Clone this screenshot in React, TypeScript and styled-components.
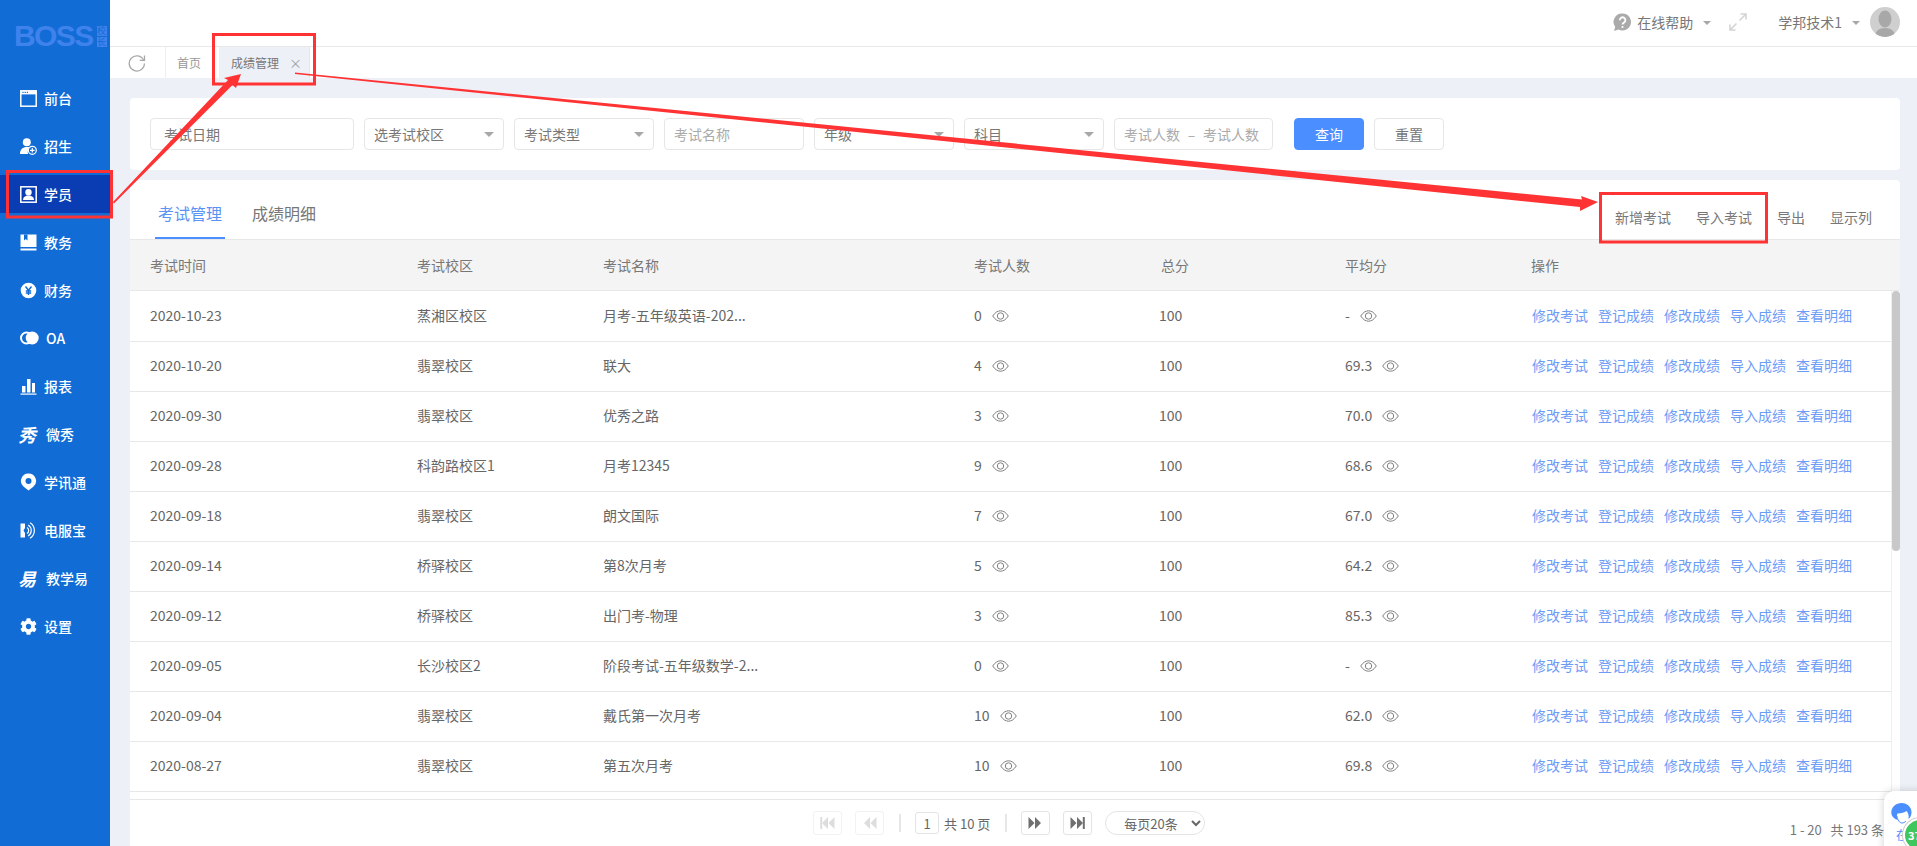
import React from 'react';
import styled, { createGlobalStyle } from 'styled-components';
import { FaCog } from 'react-icons/fa';

const GlobalStyle = createGlobalStyle`
  html, body {
    margin: 0;
    padding: 0;
    height: 100%;
    overflow: hidden;
    font-family: "Noto Sans CJK SC", "Noto Sans", sans-serif;
    font-size: 14px;
    color: #666;
    background: #fff;
  }
  * { box-sizing: border-box; }
`;

const Layout = styled.div`
  position: relative;
  display: flex;
  width: 100%;
  height: 100vh;
  overflow: hidden;
`;

/* sidebar */
const Sidebar = styled.aside`
  flex: 0 0 110px;
  background: #116cd6;
  color: #fff;
`;

const Logo = styled.div`
  display: flex;
  align-items: center;
  gap: 2px;
  height: 76px;
  padding: 0 0 4px 14px;
`;

const LogoWord = styled.span`
  font-family: "Liberation Sans", sans-serif;
  font-weight: 700;
  font-size: 30px;
  line-height: 24px;
  letter-spacing: -1.6px;
  color: #3f82ec;
`;

const LogoMark = styled.span`
  display: flex;
  flex-direction: column;
  gap: 1px;
  margin-left: 2px;
`;

const LogoChar = styled.span`
  width: 10px;
  height: 10px;
  background: #3f82ec;
  color: #116cd6;
  font-size: 9px;
  line-height: 10px;
  text-align: center;
`;

const NavList = styled.nav`
  display: flex;
  flex-direction: column;
  gap: 10px;
  padding-top: 3px;
`;

const NavItem = styled.a<{ $active?: boolean }>`
  display: flex;
  align-items: center;
  height: 38px;
  padding-left: 20px;
  background: ${(p) => (p.$active ? '#0a3db3' : 'transparent')};
  font-size: 14px;
  font-weight: 500;
  color: #fff;
`;

const NavIcon = styled.span`
  display: flex;
  align-items: center;
  min-width: 17px;
  height: 18px;
  margin-right: 7px;
  font-size: 17px;
`;

const GlyphIcon = styled.span`
  display: inline-block;
  width: 19px;
  font-size: 18px;
  font-weight: 700;
  line-height: 18px;
  transform: skewX(-14deg);
  color: #fff;
`;

/* top area */
const Main = styled.div`
  flex: 1;
  min-width: 0;
  display: flex;
  flex-direction: column;
`;

const Header = styled.header`
  flex: 0 0 47px;
  display: flex;
  align-items: center;
  justify-content: flex-end;
  padding: 0 17px 2px 0;
  border-bottom: 1px solid #e8e8e8;
  color: #777;
  font-size: 14px;
`;

const HeaderText = styled.span`
  margin-left: 5px;
`;

const Caret = styled.i<{ $size?: number; $color?: string }>`
  display: inline-block;
  width: 0;
  height: 0;
  border-left: ${(p) => p.$size ?? 5}px solid transparent;
  border-right: ${(p) => p.$size ?? 5}px solid transparent;
  border-top: ${(p) => p.$size ?? 5}px solid ${(p) => p.$color ?? '#a8a8a8'};
`;

const HeaderCaret = styled(Caret)`
  margin: 2px 0 0 10px;
`;

const ExpandWrap = styled.span`
  display: flex;
  margin: 0 31px 0 18px;
`;

const UserName = styled.span`
  color: #777;
`;

const Avatar = styled.span`
  width: 30px;
  height: 30px;
  margin-left: 10px;
  border-radius: 50%;
  background: #cfcfcf;
  overflow: hidden;
  display: flex;
`;

const TabBar = styled.div`
  flex: 0 0 31px;
  display: flex;
  align-items: stretch;
  background: #fff;
  font-size: 12px;
  color: #999;
`;

const Reload = styled.span`
  width: 56px;
  padding-left: 18px;
  display: flex;
  align-items: center;
  border-right: 1px solid #eee;
`;

const HomeTab = styled.span`
  width: 54px;
  padding-left: 11px;
  display: flex;
  align-items: center;
  border-right: 1px solid #eee;
`;

const ActiveTab = styled.span`
  width: 90px;
  padding-left: 11px;
  display: flex;
  align-items: center;
  background: #eef0f8;
  color: #777;
  border-right: 1px solid #e6e6e6;
`;

const TabClose = styled.span`
  margin-left: 10px;
  font-size: 13px;
  line-height: 1;
  color: #a0a0a0;
`;

const Content = styled.main`
  flex: 1;
  min-height: 0;
  display: flex;
  flex-direction: column;
  gap: 10px;
  padding: 20px 17px 0 20px;
  background: #eef0f8;
`;

/* filters */
const FilterCard = styled.section`
  flex: 0 0 72px;
  display: flex;
  gap: 10px;
  padding: 20px;
  background: #fff;
  border-radius: 4px;
`;

const Field = styled.input<{ $width: number; $pad?: number }>`
  width: ${(p) => p.$width}px;
  height: 32px;
  padding: 0 0 0 ${(p) => p.$pad ?? 9}px;
  border: 1px solid #e6e6e6;
  border-radius: 4px;
  font: inherit;
  color: #666;
  outline: none;
  &::placeholder { color: #aaa; }
`;

const DateField = styled(Field)`
  &::placeholder { color: #777; }
`;

const SelectBox = styled.div`
  width: 140px;
  height: 32px;
  display: flex;
  align-items: center;
  justify-content: space-between;
  padding: 0 9px;
  border: 1px solid #e6e6e6;
  border-radius: 4px;
  color: #777;
`;

const RangeBox = styled.div`
  width: 159px;
  height: 32px;
  display: flex;
  align-items: center;
  justify-content: space-between;
  padding: 0 13px 0 9px;
  border: 1px solid #e6e6e6;
  border-radius: 4px;
  color: #aaa;
`;

const Button = styled.button<{ $primary?: boolean }>`
  width: 70px;
  height: 32px;
  margin-left: ${(p) => (p.$primary ? '11px' : '0')};
  border: 1px solid ${(p) => (p.$primary ? '#4a8eff' : '#e6e6e6')};
  border-radius: 4px;
  background: ${(p) => (p.$primary ? '#4a8eff' : '#fff')};
  color: ${(p) => (p.$primary ? '#fff' : '#777')};
  font: inherit;
  padding: 0;
`;

/* table */
const TableCard = styled.section`
  flex: 1;
  min-height: 0;
  display: flex;
  flex-direction: column;
  background: #fff;
  border-radius: 4px 4px 0 0;
`;

const TabsRow = styled.div`
  flex: 0 0 59px;
  display: flex;
  align-items: stretch;
  justify-content: space-between;
  padding: 0 28px 0 25px;
`;

const Tabs = styled.div`
  display: flex;
  gap: 24px;
`;

const TabLabel = styled.span<{ $active?: boolean }>`
  display: flex;
  align-items: center;
  padding: 9px 3px 0;
  font-size: 16px;
  color: ${(p) => (p.$active ? '#5b93f5' : '#777')};
  border-bottom: 2px solid ${(p) => (p.$active ? '#4a8eff' : 'transparent')};
`;

const Actions = styled.div`
  display: flex;
  align-items: center;
  padding-top: 15px;
  color: #777;
`;

const Action = styled.span<{ $gap: number }>`
  margin-left: ${(p) => p.$gap}px;
`;

const Columns = styled.div`
  display: grid;
  grid-template-columns: 267px 186px 371px 187px 184px 186px 1fr;
  padding-left: 20px;
  align-items: center;
`;

const HeadRow = styled(Columns)`
  flex: 0 0 52px;
  background: #f4f4f4;
  border-top: 1px solid #e8e8e8;
  border-bottom: 1px solid #e8e8e8;
  color: #777;
`;

const BodyWrap = styled.div`
  position: relative;
  flex: 1;
  min-height: 0;
  overflow: hidden;
`;

const RowList = styled.div`
  height: 100%;
  margin-right: 8px;
  padding-top: 1px;
  border-right: 1px solid #eee;
`;

const ScrollThumb = styled.span`
  position: absolute;
  right: 0;
  top: 0;
  width: 8px;
  height: 260px;
  border-radius: 4px;
  background: #c8c8c8;
`;

const Row = styled(Columns)`
  grid-template-columns: 267px 186px 371px 185px 186px 186px 1fr;
  height: 50px;
  padding-bottom: 4px;
  border-bottom: 1px solid #e8e8e8;
  color: #666;
`;

const Cell = styled.span`
  display: flex;
  align-items: center;
  white-space: nowrap;
`;

const EyeWrap = styled.span`
  display: flex;
  margin: 2px 0 0 10px;
`;

const Links = styled.span`
  display: flex;
  gap: 10px;
  margin-left: 1px;
`;

const LinkText = styled.a`
  width: 56px;
  color: #6c9cf6;
  white-space: nowrap;
`;

/* pager */
const Footer = styled.footer`
  flex: 0 0 47px;
  position: relative;
  display: flex;
  align-items: center;
  padding: 0 0 0 683px;
  border-top: 1px solid #e8e8e8;
  margin-top: -1px;
  background: #fff;
  color: #666;
`;

const PageButton = styled.span<{ $off?: boolean }>`
  width: 29px;
  height: 24px;
  display: flex;
  align-items: center;
  justify-content: center;
  border: 1px solid ${(p) => (p.$off ? '#f2f2f2' : '#e4e4e4')};
  border-radius: 3px;
  margin-right: 13px;
  color: ${(p) => (p.$off ? '#ddd' : '#6f6f6f')};
`;

const PagerSep = styled.i`
  width: 2px;
  height: 18px;
  background: #e6e6e6;
  margin: 0 14px 0 2px;
`;

const PageInput = styled.input`
  width: 24px;
  height: 22px;
  padding: 0;
  border: 1px solid #e4e4e4;
  border-radius: 3px;
  text-align: center;
  font: inherit;
  font-size: 13px;
  color: #666;
`;

const PageTotal = styled.span`
  margin: 0 13px 0 5px;
  font-size: 13px;
`;

const PageSize = styled.select`
  width: 100px;
  height: 24px;
  padding-left: 14px;
  border: 1px solid #e4e4e4;
  border-radius: 12px;
  background: #fff;
  font: inherit;
  font-size: 13px;
  color: #666;
  outline: none;
`;

const Summary = styled.span`
  position: absolute;
  right: 16px;
  top: 21px;
  font-size: 13px;
  line-height: 18px;
  white-space: pre;
  color: #777;
`;

/* floating chat helper, hangs over the bottom right corner */
const Chat = styled.div`
  position: absolute;
  left: 1884px;
  top: 791px;
  width: 60px;
  height: 70px;
  background: #fff;
  border-radius: 10px;
  box-shadow: 0 0 8px rgba(0, 0, 0, 0.18);
`;

const ChatFace = styled.span`
  position: absolute;
  left: 7px;
  top: 12px;
  display: flex;
`;

const ChatLabel = styled.span`
  position: absolute;
  left: 12px;
  top: 36px;
  font-size: 12px;
  line-height: 16px;
  color: #4a8eff;
`;

const ChatBadge = styled.span`
  position: absolute;
  left: 19px;
  top: 27px;
  width: 34px;
  height: 34px;
  border-radius: 50%;
  background: #3fc65c;
  border: 2px solid #fff;
  box-shadow: 0 0 0 1px #cfcfcf;
  color: #fff;
  font-size: 11px;
  font-weight: 700;
  line-height: 30px;
  padding-left: 3px;
`;

/* the red hand drawn marks lie over the whole page */
const Marks = styled.svg`
  position: absolute;
  left: 0;
  top: 0;
  width: 1917px;
  height: 846px;
  pointer-events: none;
`;

const icons: Record<string, React.ReactNode> = {
  front: (
    <svg width="17" height="17" viewBox="0 0 17 17" fill="none">
      <rect x="0.8" y="0.8" width="15.4" height="15.4" stroke="#fff" strokeWidth="1.5" />
      <rect x="0.8" y="0.8" width="15.4" height="3.6" fill="#fff" />
      <rect x="2.4" y="1.8" width="1.2" height="1.2" fill="#116cd6" />
      <rect x="4.6" y="1.8" width="1.2" height="1.2" fill="#116cd6" />
      <rect x="6.8" y="1.8" width="1.2" height="1.2" fill="#116cd6" />
    </svg>
  ),
  enroll: (
    <svg width="17" height="17" viewBox="0 0 17 17">
      <circle cx="6.8" cy="4.3" r="4" fill="#fff" />
      <path d="M0 16c0-4.6 2.8-7 6.8-7 1.6 0 3 .4 4 1.1A5 5 0 0 0 8 16H0z" fill="#fff" />
      <circle cx="12.3" cy="12.3" r="4" fill="#116cd6" stroke="#fff" strokeWidth="1.2" />
      <path d="M12.3 10v4.6M10 12.3h4.6" stroke="#fff" strokeWidth="1.2" />
    </svg>
  ),
  student: (
    <svg width="17" height="17" viewBox="0 0 17 17" fill="none">
      <rect x="0.8" y="0.8" width="15.4" height="15.4" stroke="#fff" strokeWidth="1.5" />
      <circle cx="8.5" cy="6.3" r="3.2" fill="#fff" />
      <path d="M3 14c0-3 2.4-4.5 5.5-4.5S14 11 14 14H3z" fill="#fff" />
    </svg>
  ),
  academic: (
    <svg width="17" height="17" viewBox="0 0 17 17">
      <path d="M0.5 0.5h16v12.5H0.5z" fill="#fff" />
      <path d="M0.5 14.5h16v2h-16z" fill="#fff" />
      <path d="M4 0.5h3.5v6L5.7 5 4 6.5z" fill="#116cd6" />
    </svg>
  ),
  finance: (
    <svg width="17" height="17" viewBox="0 0 17 17" fill="none">
      <circle cx="8.5" cy="8.5" r="7.8" fill="#fff" />
      <path d="M5.5 4.5l3 3.8 3-3.8M8.5 8.3V13M5.8 9h5.4M5.8 11h5.4" stroke="#116cd6" strokeWidth="1.4" />
    </svg>
  ),
  oa: (
    <svg width="19" height="14" viewBox="0 0 19 14" fill="none">
      <circle cx="6.5" cy="7" r="5.5" stroke="#fff" strokeWidth="2" />
      <circle cx="12.2" cy="7" r="6.5" fill="#fff" />
    </svg>
  ),
  report: (
    <svg width="17" height="17" viewBox="0 0 17 17">
      <path d="M2 8h3.5v6.5H2zM7 1h3.5v13.5H7zM12 5h3v9.5h-3z" fill="#fff" />
      <path d="M0.5 15.5h16v1.2h-16z" fill="#fff" />
    </svg>
  ),
  notify: (
    <svg width="17" height="18" viewBox="0 0 17 18">
      <path d="M8.5 0.5a7.5 7.5 0 0 1 4.8 13.3L8.5 17.5l-4.8-3.7A7.5 7.5 0 0 1 8.5 0.5z" fill="#fff" />
      <circle cx="8.5" cy="8" r="3" fill="#116cd6" />
    </svg>
  ),
  service: (
    <svg width="17" height="17" viewBox="0 0 17 17" fill="none">
      <path d="M0.5 1.5h4.5V6L3.5 8.5 5 11v4.5H0.5z" fill="#fff" />
      <path d="M7 5.5a3.5 3.5 0 0 1 0 6M8.2 3a6.5 6.5 0 0 1 0 11M10 0.8a9 9 0 0 1 0 15.4" stroke="#fff" strokeWidth="1.2" />
    </svg>
  ),
};

const Eye = () => (
  <svg width="17" height="12" viewBox="0 0 17 12" fill="none" stroke="#808080" strokeWidth="1">
    <path d="M0.7 6C3 2.5 5.6 0.8 8.5 0.8S14 2.5 16.3 6C14 9.5 11.4 11.2 8.5 11.2S3 9.5 0.7 6z" />
    <circle cx="8.5" cy="6" r="3.2" />
  </svg>
);

const Triangles = ({ bar, flip }: { bar?: boolean; flip?: boolean }) => (
  <svg width="15" height="12" viewBox="0 0 15 12" fill="currentColor" style={flip ? { transform: 'scaleX(-1)' } : undefined}>
    <path d="M0.5 0l6 6-6 6zM7 0l6 6-6 6z" />
    {bar && <path d="M12.8 0h2v12h-2z" />}
  </svg>
);

const navItems = [
  { key: 'front', label: '前台' },
  { key: 'enroll', label: '招生' },
  { key: 'student', label: '学员', active: true },
  { key: 'academic', label: '教务' },
  { key: 'finance', label: '财务' },
  { key: 'oa', label: 'OA' },
  { key: 'report', label: '报表' },
  { key: 'show', label: '微秀', glyph: '秀' },
  { key: 'notify', label: '学讯通' },
  { key: 'service', label: '电服宝' },
  { key: 'easy', label: '教学易', glyph: '易' },
  { key: 'settings', label: '设置' },
];

const columns = ['考试时间', '考试校区', '考试名称', '考试人数', '总分', '平均分', '操作'];
const rowLinks = ['修改考试', '登记成绩', '修改成绩', '导入成绩', '查看明细'];

const exams = [
  ['2020-10-23', '蒸湘区校区', '月考-五年级英语-202...', '0', '100', '-'],
  ['2020-10-20', '翡翠校区', '联大', '4', '100', '69.3'],
  ['2020-09-30', '翡翠校区', '优秀之路', '3', '100', '70.0'],
  ['2020-09-28', '科韵路校区1', '月考12345', '9', '100', '68.6'],
  ['2020-09-18', '翡翠校区', '朗文国际', '7', '100', '67.0'],
  ['2020-09-14', '桥驿校区', '第8次月考', '5', '100', '64.2'],
  ['2020-09-12', '桥驿校区', '出门考-物理', '3', '100', '85.3'],
  ['2020-09-05', '长沙校区2', '阶段考试-五年级数学-2...', '0', '100', '-'],
  ['2020-09-04', '翡翠校区', '戴氏第一次月考', '10', '100', '62.0'],
  ['2020-08-27', '翡翠校区', '第五次月考', '10', '100', '69.8'],
];

export default function App() {
  return (
    <Layout>
      <GlobalStyle />
      <Sidebar>
        <Logo>
          <LogoWord>BOSS</LogoWord>
          <LogoMark>
            <LogoChar>校</LogoChar>
            <LogoChar>长</LogoChar>
          </LogoMark>
        </Logo>
        <NavList>
          {navItems.map((item) => (
            <NavItem key={item.key} $active={item.active}>
              <NavIcon>
                {item.glyph ? <GlyphIcon>{item.glyph}</GlyphIcon> : item.key === 'settings' ? <FaCog /> : icons[item.key]}
              </NavIcon>
              {item.label}
            </NavItem>
          ))}
        </NavList>
      </Sidebar>

      <Main>
        <Header>
          <svg width="19" height="19" viewBox="0 0 19 19">
            <path d="M9.5 0.5a8.5 8.5 0 1 1-4 16L1 18l1.2-4A8.5 8.5 0 0 1 9.5 0.5z" fill="#aaa" />
            <path d="M6.8 7.2a2.8 2.8 0 1 1 4.4 2.2c-1 .7-1.7 1.1-1.7 2.2" fill="none" stroke="#fff" strokeWidth="1.8" />
            <circle cx="9.5" cy="14" r="1.1" fill="#fff" />
          </svg>
          <HeaderText>在线帮助</HeaderText>
          <HeaderCaret $size={4.5} />
          <ExpandWrap>
            <svg width="18" height="18" viewBox="0 0 18 18" fill="none" stroke="#d4d4d4" strokeWidth="1.6">
              <path d="M10.5 7.5L17 1M11.5 1H17v5.5M7.5 10.5L1 17M6.5 17H1v-5.5" />
            </svg>
          </ExpandWrap>
          <UserName>学邦技术1</UserName>
          <HeaderCaret $size={4.5} />
          <Avatar>
            <svg width="30" height="30" viewBox="0 0 30 30">
              <ellipse cx="15" cy="12" rx="6.5" ry="8.5" fill="#a8a8a8" />
              <path d="M5 30c0-6 4-9 10-9s10 3 10 9z" fill="#a8a8a8" />
            </svg>
          </Avatar>
        </Header>

        <TabBar>
          <Reload>
            <svg width="18" height="18" viewBox="0 0 18 18" fill="none" stroke="#a8a8a8" strokeWidth="1.3">
              <path d="M15.6 6a7.6 7.6 0 1 0 .8 3.5" />
              <path d="M16.5 1.5V6.3h-4.8" />
            </svg>
          </Reload>
          <HomeTab>首页</HomeTab>
          <ActiveTab>
            成绩管理
            <TabClose>×</TabClose>
          </ActiveTab>
        </TabBar>

        <Content>
          <FilterCard>
            <DateField $width={204} $pad={13} placeholder="考试日期" readOnly />
            <SelectBox>
              选考试校区
              <Caret $size={5} />
            </SelectBox>
            <SelectBox>
              考试类型
              <Caret $size={5} />
            </SelectBox>
            <Field $width={140} placeholder="考试名称" readOnly />
            <SelectBox>
              年级
              <Caret $size={5} />
            </SelectBox>
            <SelectBox>
              科目
              <Caret $size={5} />
            </SelectBox>
            <RangeBox>
              <span>考试人数</span>
              <span>–</span>
              <span>考试人数</span>
            </RangeBox>
            <Button $primary>查询</Button>
            <Button>重置</Button>
          </FilterCard>

          <TableCard>
            <TabsRow>
              <Tabs>
                <TabLabel $active>考试管理</TabLabel>
                <TabLabel>成绩明细</TabLabel>
              </Tabs>
              <Actions>
                <Action $gap={0}>新增考试</Action>
                <Action $gap={25}>导入考试</Action>
                <Action $gap={25}>导出</Action>
                <Action $gap={25}>显示列</Action>
              </Actions>
            </TabsRow>
            <HeadRow>
              {columns.map((c) => (
                <Cell key={c}>{c}</Cell>
              ))}
            </HeadRow>
            <BodyWrap>
              <RowList>
                {exams.map((r) => (
                  <Row key={r[0]}>
                    <Cell>{r[0]}</Cell>
                    <Cell>{r[1]}</Cell>
                    <Cell>{r[2]}</Cell>
                    <Cell>
                      {r[3]}
                      <EyeWrap>
                        <Eye />
                      </EyeWrap>
                    </Cell>
                    <Cell>{r[4]}</Cell>
                    <Cell>
                      {r[5]}
                      <EyeWrap>
                        <Eye />
                      </EyeWrap>
                    </Cell>
                    <Links>
                      {rowLinks.map((l) => (
                        <LinkText key={l}>{l}</LinkText>
                      ))}
                    </Links>
                  </Row>
                ))}
              </RowList>
              <ScrollThumb />
            </BodyWrap>
            <Footer>
              <PageButton $off>
                <Triangles bar flip />
              </PageButton>
              <PageButton $off>
                <Triangles flip />
              </PageButton>
              <PagerSep />
              <PageInput defaultValue="1" />
              <PageTotal>共 10 页</PageTotal>
              <PagerSep />
              <PageButton>
                <Triangles />
              </PageButton>
              <PageButton>
                <Triangles bar />
              </PageButton>
              <PageSize defaultValue="20">
                <option value="20">每页20条</option>
              </PageSize>
              <Summary>{'1 - 20   共 193 条'}</Summary>
            </Footer>
          </TableCard>
        </Content>
      </Main>

      <Chat>
        <ChatFace>
          <svg width="21" height="24" viewBox="0 0 21 24">
            <path d="M10.5 0C16.5 0 21 4.5 20.5 10c-.3 3-1.5 5-3 6 .5-3 0-6-2-8-2 1.5-5 2.5-9 2.5-1 2-.8 4.5.5 6.5C3 16 .3 13 .3 9.5.3 4 5 0 10.5 0z" fill="#4a8eff" />
            <path d="M6 13c.5 4 2.5 7 5 7 1.5 0 3-.8 4-2" fill="none" stroke="#4a8eff" strokeWidth="1" />
          </svg>
        </ChatFace>
        <ChatLabel>在</ChatLabel>
        <ChatBadge>37</ChatBadge>
      </Chat>

      <Marks viewBox="0 0 1917 846" fill="none">
        <rect x="213.5" y="34.5" width="101" height="49.5" stroke="#ff3333" strokeWidth="3" />
        <rect x="7.5" y="171.5" width="104" height="45.5" stroke="#ff3333" strokeWidth="3" />
        <rect x="1600.5" y="193.5" width="166" height="48.5" stroke="#ff3333" strokeWidth="3" />
        <polygon points="113,202 228,80 224,78 241,74 236,88 232.5,85 114,203.5" fill="#ff3333" />
        <polygon points="295,72.5 1582,199.5 1581,196 1598,202 1580,211 1580,207 295,74" fill="#ff3333" />
      </Marks>
    </Layout>
  );
}
